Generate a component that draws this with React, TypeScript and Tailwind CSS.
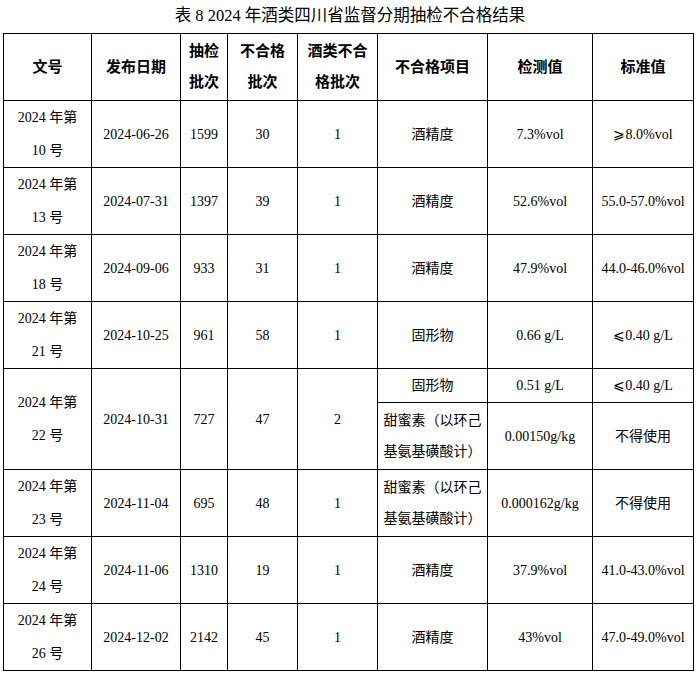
import React from 'react';

type Row = {
  no: string;
  date: string;
  total: string;
  fail: string;
  liquor: string;
  item: React.ReactNode;
  value: string;
  standard: string;
};

const rows: Row[] = [
  { no: '10', date: '2024-06-26', total: '1599', fail: '30', liquor: '1', item: '酒精度', value: '7.3%vol', standard: '⩾8.0%vol' },
  { no: '13', date: '2024-07-31', total: '1397', fail: '39', liquor: '1', item: '酒精度', value: '52.6%vol', standard: '55.0-57.0%vol' },
  { no: '18', date: '2024-09-06', total: '933', fail: '31', liquor: '1', item: '酒精度', value: '47.9%vol', standard: '44.0-46.0%vol' },
  { no: '21', date: '2024-10-25', total: '961', fail: '58', liquor: '1', item: '固形物', value: '0.66 g/L', standard: '⩽0.40 g/L' },
];

const rowsAfter: Row[] = [
  {
    no: '23', date: '2024-11-04', total: '695', fail: '48', liquor: '1',
    item: <span className="leading-[31px]">甜蜜素（以环己<br />基氨基磺酸计）</span>,
    value: '0.000162g/kg', standard: '不得使用',
  },
  { no: '24', date: '2024-11-06', total: '1310', fail: '19', liquor: '1', item: '酒精度', value: '37.9%vol', standard: '41.0-43.0%vol' },
  { no: '26', date: '2024-12-02', total: '2142', fail: '45', liquor: '1', item: '酒精度', value: '43%vol', standard: '47.0-49.0%vol' },
];

const cell = 'border-[1.5px] border-black text-center align-middle p-0';
const font = { fontFamily: '"Liberation Serif", "Noto Sans CJK SC", serif' };

const DocNo = ({ n }: { n: string }) => (
  <span className="leading-[33px]">
    2024 年第<br />
    {n} 号
  </span>
);

const DataRow = ({ r }: { r: Row }) => (
  <tr className="h-[67px]">
    <td className={cell}><DocNo n={r.no} /></td>
    <td className={cell}>{r.date}</td>
    <td className={cell}>{r.total}</td>
    <td className={cell}>{r.fail}</td>
    <td className={cell}>{r.liquor}</td>
    <td className={cell}>{r.item}</td>
    <td className={cell}>{r.value}</td>
    <td className={cell}>{r.standard}</td>
  </tr>
);

const App: React.FC = () => {
  return (
    <div className="w-[697px] h-[674px] bg-white text-black" style={font}>
      <div className="h-[33px] flex items-center justify-center text-[16.5px] pl-[3px]">
        表 8 2024 年酒类四川省监督分期抽检不合格结果
      </div>
      <table className="ml-[3px] w-[690px] table-fixed border-collapse text-[14px]">
        <colgroup>
          <col className="w-[88px]" />
          <col className="w-[89px]" />
          <col className="w-[47px]" />
          <col className="w-[70px]" />
          <col className="w-[80px]" />
          <col className="w-[110px]" />
          <col className="w-[105px]" />
          <col className="w-[101px]" />
        </colgroup>
        <thead>
          <tr className="h-[67px] font-bold text-[15px]">
            <th className={cell}>文号</th>
            <th className={cell}>发布日期</th>
            <th className={cell}><span className="leading-[31px]">抽检<br />批次</span></th>
            <th className={cell}><span className="leading-[31px]">不合格<br />批次</span></th>
            <th className={cell}><span className="leading-[31px]">酒类不合<br />格批次</span></th>
            <th className={cell}>不合格项目</th>
            <th className={cell}>检测值</th>
            <th className={cell}>标准值</th>
          </tr>
        </thead>
        <tbody>
          {rows.map((r) => (
            <DataRow key={r.no} r={r} />
          ))}
          <tr className="h-[34px]">
            <td className={cell} rowSpan={2}><DocNo n="22" /></td>
            <td className={cell} rowSpan={2}>2024-10-31</td>
            <td className={cell} rowSpan={2}>727</td>
            <td className={cell} rowSpan={2}>47</td>
            <td className={cell} rowSpan={2}>2</td>
            <td className={cell}>固形物</td>
            <td className={cell}>0.51 g/L</td>
            <td className={cell}>⩽0.40 g/L</td>
          </tr>
          <tr className="h-[67px]">
            <td className={cell}><span className="leading-[31px]">甜蜜素（以环己<br />基氨基磺酸计）</span></td>
            <td className={cell}>0.00150g/kg</td>
            <td className={cell}>不得使用</td>
          </tr>
          {rowsAfter.map((r) => (
            <DataRow key={r.no} r={r} />
          ))}
        </tbody>
      </table>
    </div>
  );
};

export default App;
